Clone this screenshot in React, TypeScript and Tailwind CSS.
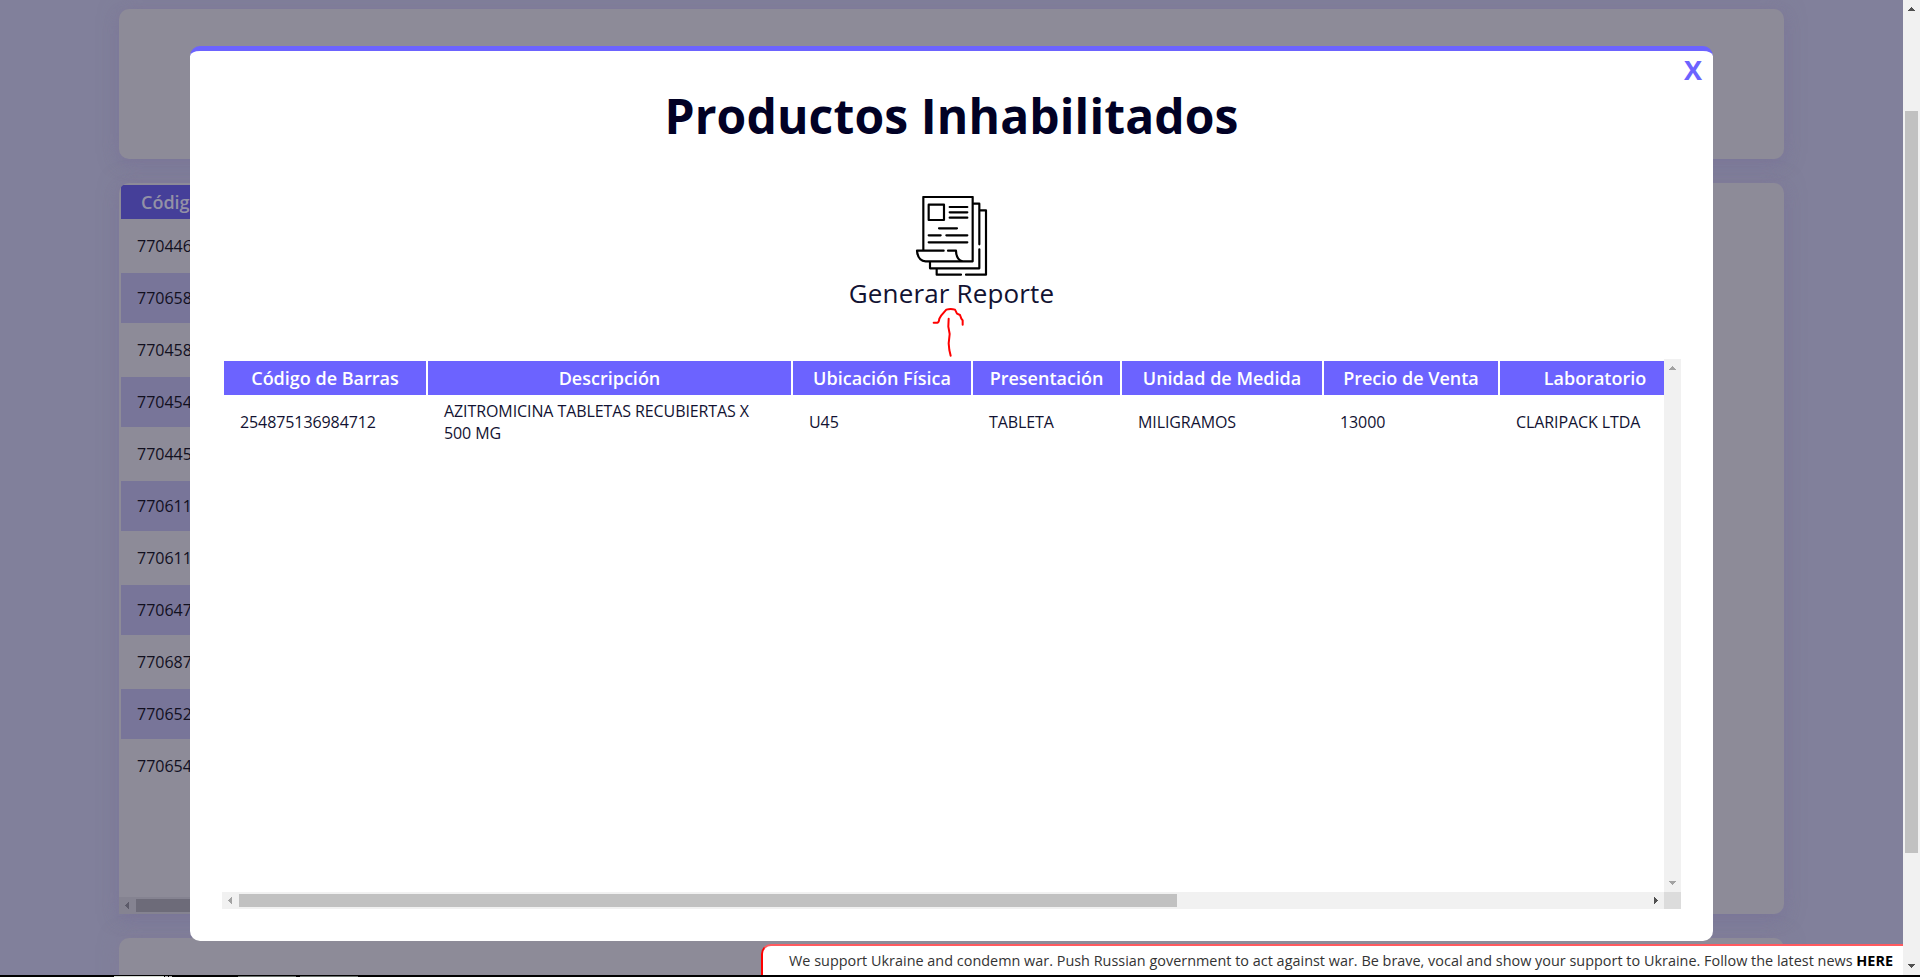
import React from "react";

const codes = ["770446", "770658", "770458", "770454", "770445", "770611", "770611", "770647", "770687", "770652", "770654"];

const columns = [
  { title: "Código de Barras", value: "254875136984712", width: "w-[202px]" },
  { title: "Descripción", value: "AZITROMICINA TABLETAS RECUBIERTAS X 500 MG", width: "w-[363px]" },
  { title: "Ubicación Física", value: "U45", width: "w-[178px]" },
  { title: "Presentación", value: "TABLETA", width: "w-[147px]" },
  { title: "Unidad de Medida", value: "MILIGRAMOS", width: "w-[200px]" },
  { title: "Precio de Venta", value: "13000", width: "w-[174px]" },
  { title: "Laboratorio", value: "CLARIPACK LTDA", width: "w-[190px]" },
];

const arrowPaths = {
  up: "M8 7h1v1h1v1h1v1h1v1H5v-1h1V9h1V8h1z",
  down: "M5 6h7v1h-1v1h-1v1H9v1H8V9H7V8H6V7H5z",
  left: "M9 5h1v7H9v-1H8v-1H7V9H6V8h1V7h1V6h1z",
  right: "M7 5h1v1h1v1h1v1h1v1h-1v1H9v1H8v1H7z",
};

function Arrow({ dir, color }: { dir: keyof typeof arrowPaths; color: string }) {
  return (
    <svg className="block size-[17px] shrink-0" viewBox="0 0 17 17" fill={color} shapeRendering="crispEdges">
      <path d={arrowPaths[dir]} />
    </svg>
  );
}

function ReportIcon() {
  return (
    <svg className="block size-20" viewBox="33 48 240 240" fill="none" stroke="#000" strokeWidth="6.5" strokeLinecap="round" strokeLinejoin="round">
      <path d="M70 210V51H218V244H77Q53 242 51 212H131" />
      <path d="M144 212H168Q169 238 185 243" />
      <path d="M86 74H132V120H86Z" />
      <path d="M149 81H202M149 97H202M149 113H202M117 145H171M86 166H122M139 166H202M86 187H202" />
      <path d="M221 71H238V193M238 208V265H90V247" />
      <path d="M241 91H258V284H198M183 284H110V268" />
    </svg>
  );
}

function Background() {
  return (
    <div className="flex h-[975px] flex-1 flex-col gap-6 overflow-hidden bg-[#81809b] pt-[9px] pl-[119px]">
      <div className="h-[150px] w-[1665px] shrink-0 rounded-[10px] bg-[#8d8b98] shadow-[0_0_20px_rgba(130,120,150,0.5),0_6px_16px_rgba(108,99,155,0.28)]" />
      <div className="flex h-[731px] w-[1665px] shrink-0 flex-col overflow-hidden rounded-[10px] rounded-bl-none bg-[#8d8b98] shadow-[0_0_20px_rgba(130,120,150,0.5),0_6px_16px_rgba(108,99,155,0.28)]">
        <div className="flex w-[200px] flex-1 flex-col gap-0.5 pt-0.5 pl-0.5">
          <div className="flex h-[34px] items-center bg-[#453f99] pl-5 text-[18px] font-semibold whitespace-nowrap text-[#9391a6]">
            Código de Barras
          </div>
          {codes.map((code, i) => (
            <div key={i} className={`flex h-[50px] items-center pl-4 text-base text-[#12101f] ${i % 2 ? "bg-[#787599]" : ""}`}>
              {code}
            </div>
          ))}
        </div>
        <div className="flex h-[17px] w-[1250px] items-center bg-[#858391]">
          <Arrow dir="left" color="#5c5a69" />
          <div className="h-[13px] w-[1200px] bg-[#6d6b79]" />
        </div>
      </div>
      <div className="h-[150px] w-[1665px] shrink-0 rounded-[10px] bg-[#8d8b98] shadow-[0_0_20px_rgba(130,120,150,0.5)]" />
    </div>
  );
}

function ProductTable() {
  return (
    <div className="grid h-[550px] w-[1459px] grid-cols-[1442px_17px] grid-rows-[533px_17px]">
      <div className="overflow-hidden pt-0.5 pl-0.5">
        <div className="flex w-max gap-0.5">
          {columns.map((c) => (
            <div key={c.title} className={`flex shrink-0 flex-col gap-0.5 ${c.width}`}>
              <div className="flex h-[34px] items-center justify-center bg-[#6c63ff] text-[18px] font-semibold whitespace-nowrap text-white">
                {c.title}
              </div>
              <div className="flex h-[50px] items-center px-4 text-base leading-[22px] tracking-[-0.09px] text-[#121232]">{c.value}</div>
            </div>
          ))}
        </div>
      </div>
      <div className="flex flex-col justify-between bg-[#f1f1f1]">
        <Arrow dir="up" color="#a3a3a3" />
        <Arrow dir="down" color="#a3a3a3" />
      </div>
      <div className="flex items-center bg-[#f1f1f1]">
        <Arrow dir="left" color="#a3a3a3" />
        <div className="h-[13px] w-[938px] bg-[#c1c1c1]" />
        <div className="flex-1" />
        <Arrow dir="right" color="#505050" />
      </div>
      <div className="bg-[#dcdcdc]" />
    </div>
  );
}

function Modal() {
  return (
    <div className="absolute top-[46px] left-[190px] flex h-[895px] w-[1523px] flex-col items-center rounded-[10px] border-t-[5px] border-[#6c63ff] bg-white text-[#010125]">
      <button className="absolute top-0 right-[11px] text-[27px] leading-[38px] font-bold text-[#6c63ff]">X</button>
      <h1 className="mt-8 text-[48px] leading-[66px] font-bold tracking-[0.13px]">Productos Inhabilitados</h1>
      <div className="mt-[47px] flex flex-col items-center">
        <ReportIcon />
        <span className="text-[26px] leading-[35px] tracking-[0.15px] text-[#121232]">Generar Reporte</span>
      </div>
      <div className="mt-12">
        <ProductTable />
      </div>
      <svg className="absolute top-[254px] left-[740px] h-[56px] w-[36px]" viewBox="90 375 108 168" fill="none" stroke="#fe0000" strokeWidth="6" strokeLinecap="round" strokeLinejoin="round">
        <path d="M101 428H112Q117 427 118 416L124 406L139 389Q152 385 165 389L171 401L180 405L184 416L188 421V434" />
        <path d="M146 416L145 440L149 462L146 490L148 510L152 527" />
      </svg>
    </div>
  );
}

export default function App() {
  return (
    <div className="relative h-[977px] w-[1920px] overflow-hidden bg-black font-['Open_Sans',sans-serif]">
      <div className="flex h-[975px]">
        <Background />
        <div className="flex w-[17px] flex-col items-center bg-[#f1f1f1]">
          <Arrow dir="up" color="#505050" />
          <div className="mt-[94px] h-[742px] w-[13px] bg-[#c1c1c1]" />
          <div className="flex-1" />
          <Arrow dir="down" color="#505050" />
        </div>
      </div>
      <div className="mt-px flex h-px pl-[114px]">
        <div className="w-[50px] bg-[#d5dad3]" />
        <div className="ml-px w-[3px] bg-[#b5b5b5]" />
        <div className="ml-px w-[3px] bg-[#b5b5b5]" />
        <div className="ml-[66px] w-[58px] bg-[#6a706c]" />
        <div className="ml-1 w-[58px] bg-[#6a706c]" />
      </div>
      <Modal />
      <div className="absolute top-[944px] left-[761px] flex h-[31px] w-[1142px] items-center rounded-tl-[10px] border-t-2 border-l-2 border-t-[#ff5a5f] border-l-[#f00] bg-white pl-[26px] text-[14.4px] tracking-[0.018px] whitespace-nowrap text-[#333]">
        <span>
          We support Ukraine and condemn war. Push Russian government to act against war. Be brave, vocal and show your support to Ukraine. Follow the latest news <b className="text-black">HERE</b>
        </span>
      </div>
    </div>
  );
}
